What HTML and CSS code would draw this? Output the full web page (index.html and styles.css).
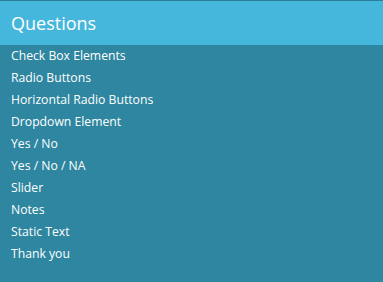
FILE: index.html
```html
<!DOCTYPE html>
<html>

<head>
  <title>Questions</title>
  <link rel="stylesheet" href="styles.css">
</head>

<body>
  <div class="panel">
    <div class="panel_head">Questions</div>
    <ul class="question_list">
      <li>Check Box Elements</li>
      <li>Radio Buttons</li>
      <li>Horizontal Radio Buttons</li>
      <li>Dropdown Element</li>
      <li>Yes / No</li>
      <li>Yes / No / NA</li>
      <li>Slider</li>
      <li>Notes</li>
      <li>Static Text</li>
      <li>Thank you</li>
    </ul>
  </div>
</body>

</html>
```
FILE: styles.css
```css
body {
  margin: 0;
  background-color: #2e86a0;
  font-family: "Open Sans", sans-serif;
}
.panel {
  width: 383px;
  height: 282px;
  border-top: 1px solid #2b7f99;
  box-sizing: border-box;
}
.panel_head {
  height: 44px;
  background-color: #45b7dc;
  color: white;
  font-size: 18px;
  line-height: 44px;
  padding-left: 11px;
}
.question_list {
  list-style: none;
  margin: 0;
  padding: 0 0 0 11px;
}
.question_list li {
  color: white;
  font-size: 12.2px;
  line-height: 22px;
}
```
